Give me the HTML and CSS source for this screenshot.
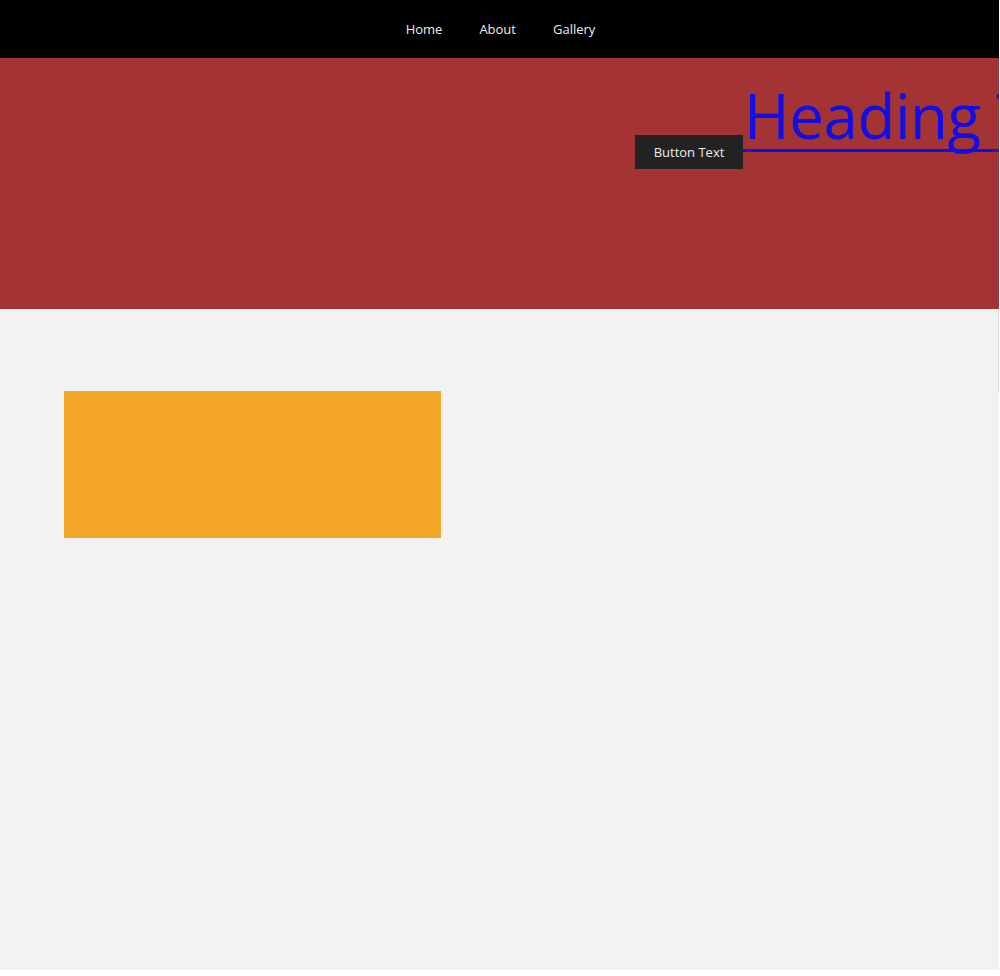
FILE: index.html
```html
<!DOCTYPE html>
<html lang="en">
<head>
<meta charset="utf-8">
<title>Page</title>
<link rel="stylesheet" href="styles.css">
</head>
<body>
<div class="page">
  <nav class="nav">
    <a class="nav-link" href="#">Home</a>
    <a class="nav-link" href="#">About</a>
    <a class="nav-link" href="#">Gallery</a>
  </nav>
  <header class="hero">
    <a class="btn" href="#">Button Text</a>
    <a class="heading" href="#">Heading Text</a>
  </header>
  <main class="main">
    <div class="main-top"></div>
    <div class="card"></div>
  </main>
</div>
</body>
</html>
```
FILE: styles.css
```css
html {
  background: #ffffff;
}
body {
  margin: 0;
  font-family: "Open Sans", "Liberation Sans", sans-serif;
}
.page {
  width: 999px;
  overflow: hidden;
}
.nav {
  height: 58px;
  background: #000000;
  display: flex;
  justify-content: center;
  align-items: center;
  gap: 37px;
  padding-left: 2px;
  box-sizing: border-box;
}
.nav-link {
  color: #ececec;
  text-decoration: none;
  font-size: 13px;
  line-height: 18px;
}
.hero {
  height: 251px;
  background: #a43434;
  display: flex;
  align-items: flex-start;
  padding-left: 635px;
  box-sizing: border-box;
  white-space: nowrap;
}
.btn {
  flex: none;
  margin-top: 77px;
  width: 108px;
  height: 34px;
  background: #222222;
  color: #ececec;
  text-decoration: none;
  font-size: 13px;
  display: flex;
  align-items: center;
  justify-content: center;
}
.heading {
  flex: none;
  margin-top: 26px;
  font-size: 62px;
  line-height: 1;
  letter-spacing: -0.5px;
  color: #1010e6;
  text-decoration: none;
  padding-bottom: 3px;
  border-bottom: 3px solid #1010e6;
  padding-left: 1px;
}
.main {
  height: 661px;
  background: #f2f2f2;
}
.main-top {
  height: 82px;
  border-right: 1px solid #d9d9d9;
}
.card {
  margin-left: 64px;
  width: 377px;
  height: 147px;
  background: #f5a728;
}
```
